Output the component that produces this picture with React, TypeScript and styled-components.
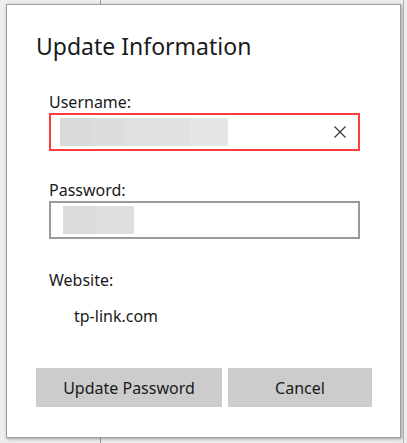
import React from "react";
import styled, { createGlobalStyle } from "styled-components";

const GlobalStyle = createGlobalStyle`
  html, body {
    margin: 0;
    padding: 0;
    background: #ededed;
    font-family: "Noto Sans", "Open Sans", sans-serif;
    color: #1a1a1a;
  }
`;

const Backdrop = styled.div`
  position: relative;
  width: 407px;
  height: 443px;
  overflow: hidden;
  padding: 4px 0 0 6px;
  box-sizing: border-box;

  /* a window edge behind the dialog */
  &::before {
    content: "";
    position: absolute;
    left: 100px;
    top: 0;
    bottom: 0;
    width: 1px;
    background: #9a9a9a;
  }
  &::after {
    content: "";
    position: absolute;
    left: 403px;
    top: 0;
    bottom: 0;
    width: 1px;
    background: #b5b5b5;
  }
`;

const Dialog = styled.div`
  position: relative;
  z-index: 1;
  width: 395px;
  height: 434px;
  box-sizing: border-box;
  background: #fff;
  border: 1px solid #9e9e9e;
  box-shadow: 1px 1px 3px rgba(0, 0, 0, 0.35);
  display: flex;
  flex-direction: column;
`;

const Title = styled.h1`
  margin: 25px 0 0 29px;
  font-size: 23px;
  font-weight: 400;
  line-height: 32px;
`;

const Fields = styled.div`
  display: flex;
  flex-direction: column;
  padding-left: 42px;
  margin-top: 30px;
`;

const Label = styled.div<{ $gap?: number }>`
  font-size: 16px;
  line-height: 20px;
  margin-top: ${(p) => p.$gap ?? 0}px;
`;

const InputBox = styled.div<{ $error?: boolean }>`
  width: 311px;
  height: 38px;
  box-sizing: border-box;
  margin-top: 1px;
  border: 2px solid ${(p) => (p.$error ? "#ff3b3b" : "#9a9a9a")};
  display: flex;
  align-items: center;
  padding: 0 10px 0 ${(p) => (p.$error ? 9 : 12)}px;
`;

const Blur = styled.div`
  display: flex;
  height: 28px;
`;

const BlurPart = styled.div<{ $w: number; $c: string }>`
  width: ${(p) => p.$w}px;
  background: ${(p) => p.$c};
`;

const ClearButton = styled.button`
  margin-left: auto;
  width: 16px;
  height: 16px;
  padding: 0;
  border: none;
  background: none;
  display: flex;
  align-items: center;
  justify-content: center;
`;

const Value = styled.div`
  font-size: 16px;
  line-height: 20px;
  margin: 16px 0 0 25px;
`;

const ButtonRow = styled.div`
  display: flex;
  gap: 6px;
  padding-left: 29px;
  margin-top: 42px;
`;

const Button = styled.button<{ $w: number }>`
  width: ${(p) => p.$w}px;
  height: 39px;
  border: none;
  background: #cccccc;
  font-family: inherit;
  font-size: 16px;
  color: #1a1a1a;
`;

export default function App() {
  return (
    <>
      <GlobalStyle />
      <Backdrop>
        <Dialog>
          <Title>Update Information</Title>
          <Fields>
            <Label>Username:</Label>
            <InputBox $error>
              <Blur>
                <BlurPart $w={33} $c="#dadada" />
                <BlurPart $w={32} $c="#dddddd" />
                <BlurPart $w={32} $c="#e0e0e0" />
                <BlurPart $w={33} $c="#e1e1e1" />
                <BlurPart $w={38} $c="#e6e6e6" />
              </Blur>
              <ClearButton aria-label="clear">
                <svg width="12" height="12" viewBox="0 0 12 12">
                  <path d="M0.5 0.5 L11.5 11.5 M11.5 0.5 L0.5 11.5" stroke="#333" strokeWidth="1.1" />
                </svg>
              </ClearButton>
            </InputBox>
            <Label $gap={29}>Password:</Label>
            <InputBox>
              <Blur>
                <BlurPart $w={32} $c="#dcdcdc" />
                <BlurPart $w={39} $c="#dedede" />
              </Blur>
            </InputBox>
            <Label $gap={31}>Website:</Label>
            <Value>tp-link.com</Value>
          </Fields>
          <ButtonRow>
            <Button $w={186}>Update Password</Button>
            <Button $w={144}>Cancel</Button>
          </ButtonRow>
        </Dialog>
      </Backdrop>
    </>
  );
}
